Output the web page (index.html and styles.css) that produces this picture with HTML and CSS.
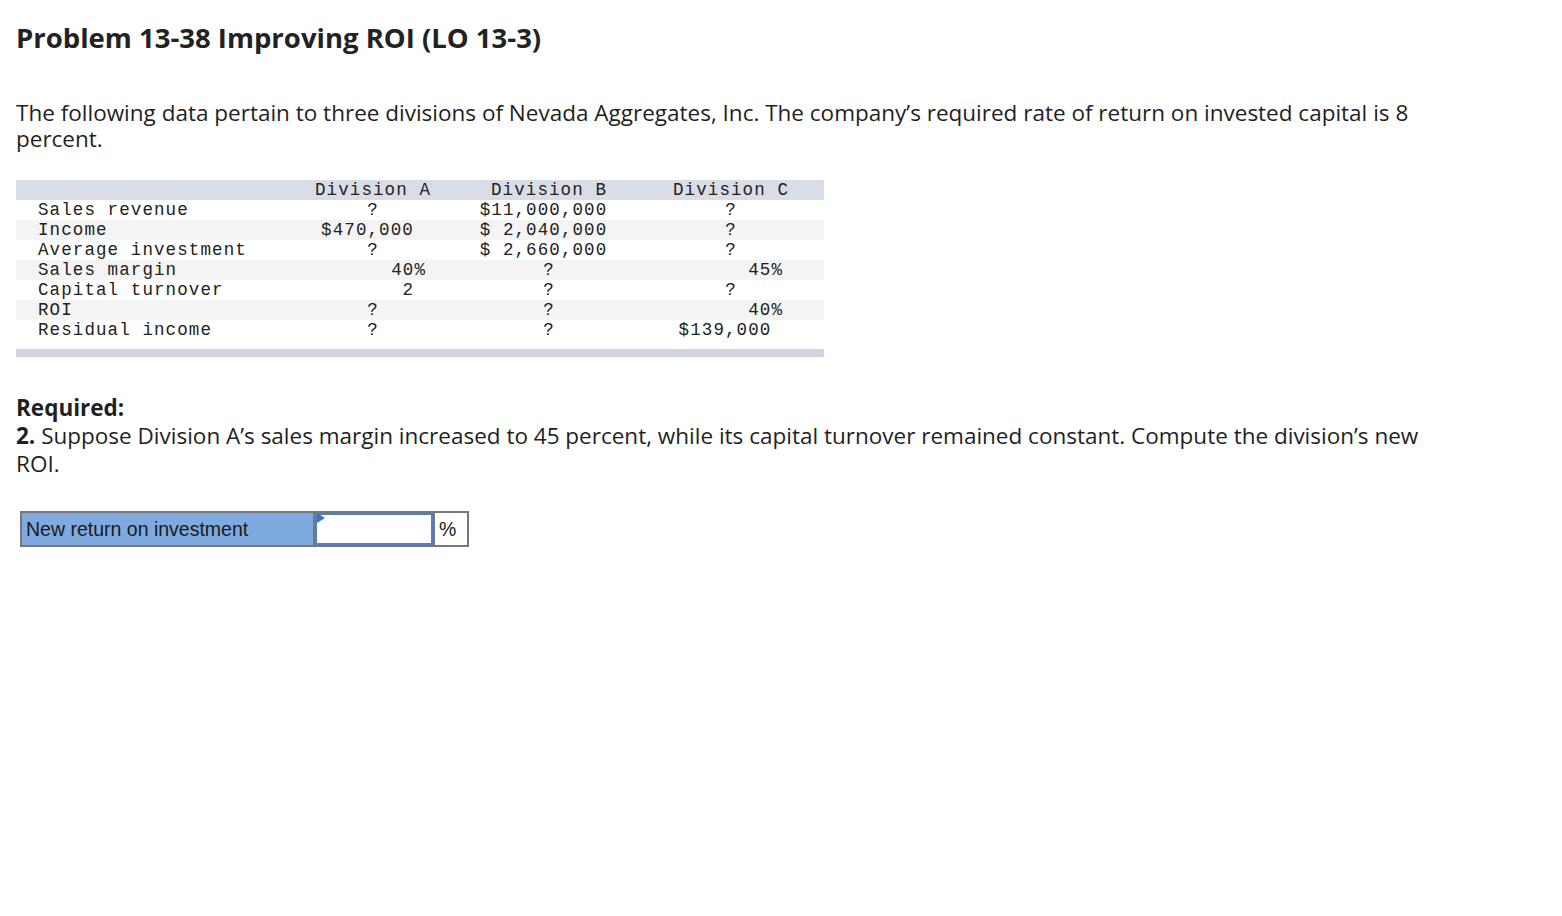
FILE: index.html
```html
<!DOCTYPE html>
<html>
<head>
<meta charset="utf-8">
<link rel="stylesheet" href="styles.css">
</head>
<body>
<h1 class="title">Problem 13-38 Improving ROI (LO 13-3)</h1>
<p class="intro">The following data pertain to three divisions of Nevada Aggregates, Inc. The company’s required rate of return on invested capital is 8 percent.</p>

<div class="data">
  <div class="row head">
    <div class="lab"></div>
    <div class="ca">Division A</div>
    <div class="cb">Division B</div>
    <div class="cc">Division C</div>
  </div>
  <div class="row">
    <div class="lab">Sales revenue</div>
    <div class="ca">?</div>
    <div class="cb pr11">$11,000,000</div>
    <div class="cc">?</div>
  </div>
  <div class="row alt">
    <div class="lab">Income</div>
    <div class="ca pr11">$470,000</div>
    <div class="cb pr11">$ 2,040,000</div>
    <div class="cc">?</div>
  </div>
  <div class="row">
    <div class="lab">Average investment</div>
    <div class="ca">?</div>
    <div class="cb pr11">$ 2,660,000</div>
    <div class="cc">?</div>
  </div>
  <div class="row alt">
    <div class="lab">Sales margin</div>
    <div class="ca right r31">40%</div>
    <div class="cb">?</div>
    <div class="cc right r38">45%</div>
  </div>
  <div class="row">
    <div class="lab">Capital turnover</div>
    <div class="ca right r43">2</div>
    <div class="cb">?</div>
    <div class="cc">?</div>
  </div>
  <div class="row alt">
    <div class="lab">ROI</div>
    <div class="ca">?</div>
    <div class="cb">?</div>
    <div class="cc right r38">40%</div>
  </div>
  <div class="row">
    <div class="lab">Residual income</div>
    <div class="ca">?</div>
    <div class="cb">?</div>
    <div class="cc pr12">$139,000</div>
  </div>
  <div class="foot"></div>
</div>

<p class="req"><strong>Required:</strong><br><strong>2.</strong> Suppose Division A’s sales margin increased to 45 percent, while its capital turnover remained constant. Compute the division’s new ROI.</p>

<div class="answer">
  <div class="alabel">New return on investment</div>
  <div class="ainput"><span class="flag"></span></div>
  <div class="aunit">%</div>
</div>
</body>
</html>
```

FILE: styles.css
```css
html, body {
  margin: 0;
  padding: 0;
  background: #ffffff;
}
body {
  padding: 0 16px;
  font-family: "Open Sans", "Lato", sans-serif;
  color: #1f1f1f;
}
.title {
  margin: 22px 0 0 0;
  font-size: 27.5px;
  line-height: 32px;
  font-weight: 700;
  color: #222;
}
.intro {
  margin: 46px 0 0 0;
  font-size: 22.5px;
  line-height: 26px;
  max-width: 1420px;
}
.data {
  margin-top: 28px;
  width: 808px;
  font-family: "Liberation Mono", "Courier New", monospace;
  font-size: 17.5px;
  letter-spacing: 1.1px;
  color: #222;
}
.row {
  display: grid;
  grid-template-columns: 274px 166px 186px 178px 4px;
  height: 20px;
  line-height: 20px;
  white-space: pre;
}
.row.head {
  background: #d9dde6;
}
.row.alt {
  background: #f4f4f4;
}
.lab {
  padding-left: 22px;
}
.ca, .cb, .cc {
  text-align: center;
}
.right { text-align: right; }
.pr11 { padding-right: 11px; }
.pr12 { padding-right: 12px; }
.r31 { padding-right: 30px; }
.r38 { padding-right: 37px; }
.r43 { padding-right: 42px; }
.foot {
  margin-top: 9px;
  height: 8px;
  background: #d0d5e0;
}
.req {
  margin: 37px 0 0 0;
  font-size: 22.5px;
  line-height: 28px;
  max-width: 1420px;
}
.req strong {
  font-weight: 700;
}
.answer {
  margin: 33px 0 0 4px;
  display: flex;
  height: 36px;
}
.answer > div {
  box-sizing: border-box;
}
.alabel {
  width: 295px;
  background: #7eaae0;
  border: 2px solid #777;
  font-family: "Liberation Sans", Arial, sans-serif;
  font-size: 19.5px;
  line-height: 32px;
  padding-left: 4px;
  color: #1a1a1a;
}
.ainput {
  position: relative;
  width: 120px;
  background: #fff;
  border: 2px solid #777;
  border-left: none;
  box-shadow: inset 0 0 0 2px #4f7fc4;
}
.flag {
  position: absolute;
  left: 2px;
  top: 0;
  width: 0;
  height: 0;
  border-top: 5px solid transparent;
  border-bottom: 5px solid transparent;
  border-left: 8px solid #3b73c4;
}
.aunit {
  width: 34px;
  border: 2px solid #777;
  border-left: none;
  font-family: "Liberation Sans", Arial, sans-serif;
  font-size: 19.5px;
  line-height: 32px;
  padding-left: 4px;
  color: #1a1a1a;
}
```
